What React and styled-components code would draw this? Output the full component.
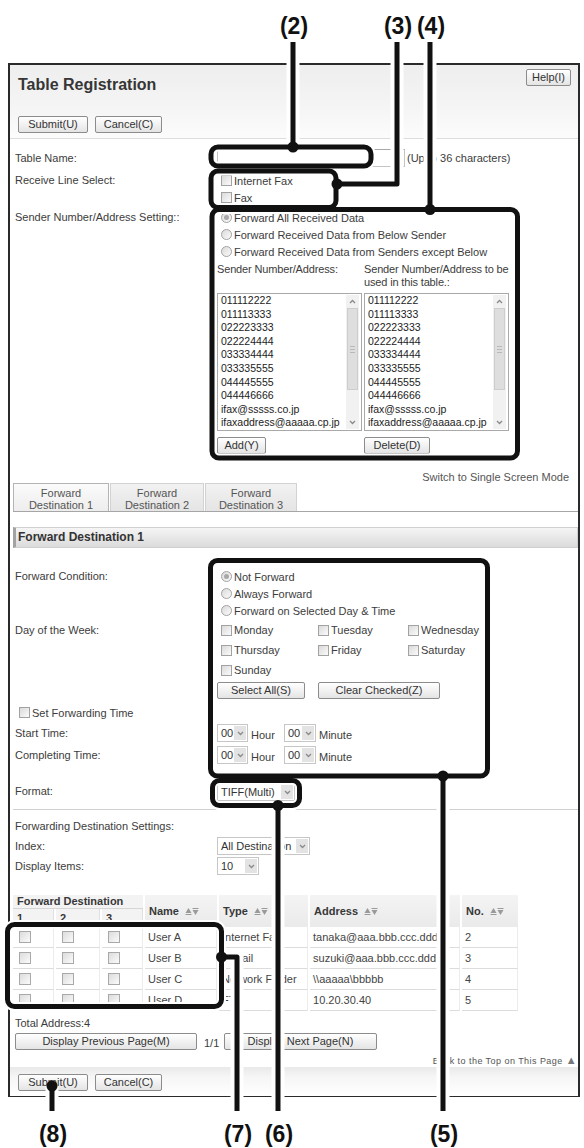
import React from "react";
import styled, { createGlobalStyle } from "styled-components";

const GlobalStyle = createGlobalStyle`
  html, body {
    margin: 0;
    padding: 0;
    background: #fff;
  }
  body {
    font-family: "Liberation Sans", Arial, sans-serif;
    font-size: 11px;
    color: #3c3c3c;
  }
  * {
    box-sizing: border-box;
  }
`;

const SENDERS = [
  "011112222",
  "011113333",
  "022223333",
  "022224444",
  "033334444",
  "033335555",
  "044445555",
  "044446666",
  "ifax@sssss.co.jp",
  "ifaxaddress@aaaaa.cp.jp",
];

const DAYS = [
  "Monday",
  "Tuesday",
  "Wednesday",
  "Thursday",
  "Friday",
  "Saturday",
  "Sunday",
];

const DESTINATIONS = [
  { name: "User A", type: "Internet Fax", address: "tanaka@aaa.bbb.ccc.ddd", no: 2 },
  { name: "User B", type: "E-mail", address: "suzuki@aaa.bbb.ccc.ddd", no: 3 },
  { name: "User C", type: "Network Folder", address: "\\\\aaaaa\\bbbbb", no: 4 },
  { name: "User D", type: "FTP", address: "10.20.30.40", no: 5 },
];

const COLUMNS = [41, 44, 41, 72, 89, 128, 20, 56];

// callout boxes and leader lines drawn over the screenshot
const BOXES = [
  { x: 211, y: 147, w: 160, h: 19 },
  { x: 211, y: 171, w: 125, h: 36.5 },
  { x: 212, y: 209.5, w: 305.5, h: 248.5 },
  { x: 210.5, y: 560.5, w: 277, h: 215.5 },
  { x: 212.5, y: 780.5, w: 87, h: 25 },
  { x: 7.5, y: 924.5, w: 214, h: 82 },
];

const LEADERS = [
  "M293 42 V147",
  "M397 42 V184 H337",
  "M430 42 V209.5",
  "M443 776 V1111",
  "M278 805.5 V1111",
  "M221.5 957 H237 V1111",
  "M52 1086 V1111",
];

const DOTS = [
  [293, 147],
  [337, 184],
  [430, 209.5],
  [443, 776],
  [278, 805.5],
  [221.5, 957],
  [52, 1086],
];

const LABELS = [
  { t: "(2)", x: 294, y: 34 },
  { t: "(3)", x: 398, y: 34 },
  { t: "(4)", x: 431, y: 34 },
  { t: "(8)", x: 53, y: 1142 },
  { t: "(7)", x: 238, y: 1142 },
  { t: "(6)", x: 279, y: 1142 },
  { t: "(5)", x: 444, y: 1142 },
];

const Chevron = ({ up }) => (
  <svg width="7" height="5" viewBox="0 0 7 5">
    <polyline
      points={up ? "1,4 3.5,1.5 6,4" : "1,1 3.5,3.5 6,1"}
      fill="none"
      stroke="#8a8a8a"
      strokeWidth="1.3"
    />
  </svg>
);

const SortIcon = () => (
  <SortSvg width="14" height="9" viewBox="0 0 14 9">
    <path d="M0.5 6 L3.5 1 L6.5 6 Z" fill="#9a9a9a" />
    <rect x="0.5" y="7" width="6" height="1" fill="#9a9a9a" />
    <rect x="7.5" y="1" width="6" height="1" fill="#9a9a9a" />
    <path d="M7.5 3 L13.5 3 L10.5 8 Z" fill="#9a9a9a" />
  </SortSvg>
);

const Dropdown = ({ w, children }) => (
  <Select $w={w}>
    <span>{children}</span>
    <SelectArrow>
      <Chevron />
    </SelectArrow>
  </Select>
);

const SenderList = () => (
  <ListBox>
    <ListItems>
      {SENDERS.map((s) => (
        <div key={s}>{s}</div>
      ))}
    </ListItems>
    <ScrollBar>
      <ScrollArrow>
        <Chevron up />
      </ScrollArrow>
      <ScrollThumb>
        <Grip />
        <Grip />
        <Grip />
      </ScrollThumb>
      <ScrollTrack />
      <ScrollArrow>
        <Chevron />
      </ScrollArrow>
    </ScrollBar>
  </ListBox>
);

const TimeSelects = () => (
  <TimeLine>
    <Line $h={18}>
      <Dropdown w={31}>00</Dropdown>
      <Unit>Hour</Unit>
    </Line>
    <Line $h={18}>
      <Dropdown w={32}>00</Dropdown>
      <Unit>Minute</Unit>
    </Line>
  </TimeLine>
);

const App = () => {
  return (
    <Page>
      <GlobalStyle />
      <Frame>
        <Header>
          <TitleLine>
            <Title>Table Registration</Title>
            <Button $w={45} $top={4}>
              Help(I)
            </Button>
          </TitleLine>
          <ButtonBar>
            <Button $w={70}>Submit(U)</Button>
            <Button $w={67}>Cancel(C)</Button>
          </ButtonBar>
        </Header>

        <Form>
          <Row $mt={10}>
            <Label $lh={18}>Table Name:</Label>
            <Line $h={18}>
              <TextInput />
              <Hint>(Up to 36 characters)</Hint>
            </Line>
          </Row>

          <Row $mt={5}>
            <Label>Receive Line Select:</Label>
            <div>
              <Line>
                <Check />
                Internet Fax
              </Line>
              <Line>
                <Check />
                Fax
              </Line>
            </div>
          </Row>

          <Row $mt={3}>
            <Label>Sender Number/Address Setting::</Label>
            <div>
              <Line>
                <Radio $on />
                Forward All Received Data
              </Line>
              <Line>
                <Radio />
                Forward Received Data from Below Sender
              </Line>
              <Line>
                <Radio />
                Forward Received Data from Senders except Below
              </Line>
              <Pair $mt={3}>
                <ColHead>Sender Number/Address:</ColHead>
                <ColHead>
                  Sender Number/Address to be
                  <br />
                  used in this table.:
                </ColHead>
              </Pair>
              <Pair $mt={4}>
                <SenderList />
                <SenderList />
              </Pair>
              <Pair $mt={6}>
                <div>
                  <Button $w={49}>Add(Y)</Button>
                </div>
                <div>
                  <Button $w={66}>Delete(D)</Button>
                </div>
              </Pair>
            </div>
          </Row>

          <SwitchMode>Switch to Single Screen Mode</SwitchMode>

          <Tabs>
            <Tab $w={96} $active>
              Forward
              <br />
              Destination 1
            </Tab>
            <Tab $w={94}>
              Forward
              <br />
              Destination 2
            </Tab>
            <Tab $w={92}>
              Forward
              <br />
              Destination 3
            </Tab>
          </Tabs>

          <SectionBar>Forward Destination 1</SectionBar>

          <Row $mt={20}>
            <Label>Forward Condition:</Label>
            <div>
              <Line>
                <Radio $on />
                Not Forward
              </Line>
              <Line>
                <Radio />
                Always Forward
              </Line>
              <Line>
                <Radio />
                Forward on Selected Day &amp; Time
              </Line>
            </div>
          </Row>

          <Row $mt={1}>
            <Label $lh={20}>Day of the Week:</Label>
            <div>
              <DayGrid>
                {DAYS.map((d) => (
                  <Line key={d} $h={20}>
                    <Check />
                    {d}
                  </Line>
                ))}
              </DayGrid>
              <ButtonBar $gap={13} $mt={2}>
                <Button $w={88}>Select All(S)</Button>
                <Button $w={122}>Clear Checked(Z)</Button>
              </ButtonBar>
            </div>
          </Row>

          <Row $mt={5}>
            <Line>
              <Check />
              Set Forwarding Time
            </Line>
          </Row>

          <Row $mt={3}>
            <Label $lh={18}>Start Time:</Label>
            <TimeSelects />
          </Row>

          <Row $mt={4}>
            <Label $lh={18}>Completing Time:</Label>
            <TimeSelects />
          </Row>

          <Row $mt={19}>
            <Label $lh={16}>Format:</Label>
            <Dropdown w={78}>TIFF(Multi)</Dropdown>
          </Row>

          <Separator />

          <WideLabel>Forwarding Destination Settings:</WideLabel>

          <Row $mt={2}>
            <Label $lh={18}>Index:</Label>
            <Dropdown w={93}>All Destination</Dropdown>
          </Row>

          <Row $mt={2}>
            <Label $lh={18}>Display Items:</Label>
            <Dropdown w={42}>10</Dropdown>
          </Row>

          <DestTable>
            <colgroup>
              {COLUMNS.map((w, i) => (
                <Col key={i} $w={w} />
              ))}
            </colgroup>
            <thead>
              <tr>
                <GroupHead colSpan={3}>Forward Destination</GroupHead>
                <Th rowSpan={2}>
                  Name
                  <SortIcon />
                </Th>
                <Th rowSpan={2}>
                  Type
                  <SortIcon />
                </Th>
                <Th rowSpan={2}>
                  Address
                  <SortIcon />
                </Th>
                <Th rowSpan={2} />
                <Th rowSpan={2}>
                  No.
                  <SortIcon />
                </Th>
              </tr>
              <tr>
                <SubHead>1</SubHead>
                <SubHead>2</SubHead>
                <SubHead>3</SubHead>
              </tr>
            </thead>
            <tbody>
              {DESTINATIONS.map((d) => (
                <tr key={d.name}>
                  <Td>
                    <CellCheck />
                  </Td>
                  <Td>
                    <CellCheck />
                  </Td>
                  <Td>
                    <CellCheck />
                  </Td>
                  <Td>{d.name}</Td>
                  <Td>{d.type}</Td>
                  <Td>{d.address}</Td>
                  <Td />
                  <Td>{d.no}</Td>
                </tr>
              ))}
            </tbody>
          </DestTable>

          <Total>Total Address:4</Total>

          <Pager>
            <Button $w={182}>Display Previous Page(M)</Button>
            <PageCount>1/1</PageCount>
            <Button $w={153}>Display Next Page(N)</Button>
          </Pager>

          <BackTop>
            Back to the Top on This Page <span>▲</span>
          </BackTop>
        </Form>

        <Footer>
          <Button $w={70}>Submit(U)</Button>
          <Button $w={67}>Cancel(C)</Button>
        </Footer>
      </Frame>

      <Overlay width="584" height="1148" viewBox="0 0 584 1148">
        <g fill="none" stroke="#fff" strokeLinejoin="round">
          {BOXES.map((b, i) => (
            <rect key={i} x={b.x} y={b.y} width={b.w} height={b.h} rx="7" strokeWidth="9" />
          ))}
          {LEADERS.map((d) => (
            <path key={d} d={d} strokeWidth="13" />
          ))}
        </g>
        <g fill="none" stroke="#111" strokeWidth="5" strokeLinejoin="round">
          {BOXES.map((b, i) => (
            <rect key={i} x={b.x} y={b.y} width={b.w} height={b.h} rx="7" />
          ))}
          {LEADERS.map((d) => (
            <path key={d} d={d} />
          ))}
        </g>
        {DOTS.map(([cx, cy]) => (
          <circle key={`${cx}-${cy}`} cx={cx} cy={cy} r="5.5" fill="#111" />
        ))}
        {LABELS.map((l) => (
          <CalloutText key={l.t} x={l.x} y={l.y} textAnchor="middle">
            {l.t}
          </CalloutText>
        ))}
      </Overlay>
    </Page>
  );
};

export default App;

const Page = styled.div`
  position: relative;
  width: 584px;
  height: 1148px;
  padding-top: 63px;
  overflow: hidden;
`;

const Frame = styled.div`
  margin-left: 8px;
  width: 572px;
  height: 1034px;
  border: 2px solid #2a2a2a;
  display: flex;
  flex-direction: column;
  > * {
    flex-shrink: 0;
  }
`;

const Header = styled.div`
  height: 74px;
  padding: 0 7px 5px 8px;
  display: flex;
  flex-direction: column;
  justify-content: space-between;
  background: linear-gradient(#eeeeee, #f5f5f5 60%, #fcfcfc);
  border-bottom: 1px solid #dddddd;
`;

const TitleLine = styled.div`
  display: flex;
  justify-content: space-between;
  align-items: flex-start;
`;

const Title = styled.h1`
  margin: 10px 0 0;
  font-size: 16px;
  line-height: 20px;
  font-weight: bold;
  color: #363636;
`;

const ButtonBar = styled.div`
  display: flex;
  gap: ${(p) => p.$gap || 7}px;
  margin-top: ${(p) => p.$mt || 0}px;
`;

const Button = styled.button`
  flex: none;
  width: ${(p) => p.$w}px;
  height: 17px;
  margin-top: ${(p) => p.$top || 0}px;
  padding: 0;
  font-family: "Liberation Sans", Arial, sans-serif;
  font-size: 11px;
  line-height: 15px;
  white-space: nowrap;
  color: #333;
  background: linear-gradient(#ffffff, #e4e4e4);
  border: 1px solid #8c8c8c;
  border-radius: 2px;
`;

const Form = styled.div`
  padding-left: 5px;
`;

const Row = styled.div`
  display: grid;
  grid-template-columns: 202px 1fr;
  margin-top: ${(p) => p.$mt || 0}px;
`;

const Label = styled.div`
  line-height: ${(p) => p.$lh || 17}px;
  white-space: nowrap;
`;

const WideLabel = styled.div`
  margin-top: 8px;
  line-height: 17px;
`;

const Line = styled.div`
  display: flex;
  align-items: center;
  height: ${(p) => p.$h || 17}px;
  white-space: nowrap;
`;

const Check = styled.span`
  flex: none;
  width: 11px;
  height: 11px;
  margin: 0 2px 0 4px;
  border: 1px solid #a2a2a2;
  background: linear-gradient(135deg, #dadada, #fbfbfb);
`;

const Radio = styled.span`
  flex: none;
  position: relative;
  width: 11px;
  height: 11px;
  margin: 0 2px 0 4px;
  border: 1px solid #a2a2a2;
  border-radius: 50%;
  background: linear-gradient(135deg, #dadada, #fbfbfb);
  &::after {
    content: "";
    display: ${(p) => (p.$on ? "block" : "none")};
    position: absolute;
    left: 2px;
    top: 2px;
    width: 5px;
    height: 5px;
    border-radius: 50%;
    background: #a8a8a8;
  }
`;

const TextInput = styled.div`
  width: 188px;
  height: 18px;
  border: 1px solid #c4c4c4;
  border-top-color: #a8a8a8;
  background: #fff;
`;

const Hint = styled.span`
  margin-left: 2px;
`;

const Pair = styled.div`
  display: grid;
  grid-template-columns: 145px 145px;
  column-gap: 2px;
  margin-top: ${(p) => p.$mt || 0}px;
`;

const ColHead = styled.div`
  line-height: 13px;
  min-height: 26px;
  white-space: nowrap;
  letter-spacing: -0.15px;
`;

const ListBox = styled.div`
  display: flex;
  height: 138px;
  border: 1px solid #a9a9a9;
  background: #fff;
`;

const ListItems = styled.div`
  flex: 1;
  min-width: 0;
  padding-left: 3px;
  font-size: 10.5px;
  line-height: 13.6px;
  color: #222;
  white-space: nowrap;
  overflow: hidden;
`;

const ScrollBar = styled.div`
  flex: none;
  width: 13px;
  margin: 1px 2px 1px 0;
  display: flex;
  flex-direction: column;
  background: #f1f1f1;
`;

const ScrollArrow = styled.div`
  height: 13px;
  display: flex;
  align-items: center;
  justify-content: center;
`;

const ScrollThumb = styled.div`
  height: 82px;
  margin: 0 1px;
  display: flex;
  flex-direction: column;
  justify-content: center;
  align-items: center;
  gap: 2px;
  background: #dedede;
  border: 1px solid #cdcdcd;
`;

const Grip = styled.span`
  width: 5px;
  height: 1px;
  background: #b8b8b8;
`;

const ScrollTrack = styled.div`
  flex: 1;
`;

const SwitchMode = styled.div`
  margin-top: 17px;
  padding-right: 9px;
  line-height: 12px;
  text-align: right;
  color: #555;
`;

const Tabs = styled.div`
  display: flex;
  gap: 1px;
  height: 29px;
  margin-left: -2px;
  border-bottom: 1px solid #a6a6a6;
`;

const Tab = styled.div`
  width: ${(p) => p.$w}px;
  height: 28px;
  padding-top: 3px;
  line-height: 12px;
  text-align: center;
  color: #555;
  border: 1px solid ${(p) => (p.$active ? "#b4b4b4" : "#d2d2d2")};
  border-bottom: none;
  background: ${(p) =>
    p.$active
      ? "linear-gradient(#fbfbfb, #ededed)"
      : "linear-gradient(#f2f2f2, #e4e4e4)"};
`;

const SectionBar = styled.div`
  margin: 15px 0 0 -2px;
  height: 21px;
  padding-left: 2px;
  line-height: 19px;
  font-size: 12px;
  font-weight: bold;
  color: #333;
  background: linear-gradient(#f5f5f5, #dbdbdb);
  border: 1px solid #d0d0d0;
  border-left: 3px solid #a3a3a3;
`;

const DayGrid = styled.div`
  display: grid;
  grid-template-columns: 97px 90px auto;
`;

const TimeLine = styled.div`
  display: grid;
  grid-template-columns: 67px auto;
`;

const Unit = styled.span`
  margin-left: 3px;
  padding-top: 3px;
`;

const Select = styled.div`
  flex: none;
  width: ${(p) => p.$w}px;
  height: 18px;
  padding-left: 3px;
  display: flex;
  align-items: center;
  justify-content: space-between;
  white-space: nowrap;
  overflow: hidden;
  color: #333;
  background: #fff;
  border: 1px solid #c6c6c6;
`;

const SelectArrow = styled.span`
  flex: none;
  width: 12px;
  height: 14px;
  margin-right: 1px;
  display: flex;
  align-items: center;
  justify-content: center;
  background: #e3e3e3;
`;

const Separator = styled.div`
  margin: 8px 0 0 -2px;
  border-top: 1px solid #d0d0d0;
`;

const DestTable = styled.table`
  margin: 20px 0 0 -4px;
  width: 509px;
  table-layout: fixed;
  border-collapse: separate;
  border-spacing: 2px 0;
  font-size: 11px;
`;

const Col = styled.col`
  width: ${(p) => p.$w}px;
`;

const Th = styled.th`
  height: 32px;
  padding: 0 0 0 4px;
  text-align: left;
  white-space: nowrap;
  font-weight: bold;
  color: #383838;
  background: linear-gradient(#f4f4f4, #eaeaea);
`;

const GroupHead = styled(Th)`
  height: 14px;
  line-height: 13px;
  vertical-align: top;
  background: #f3f3f3;
  border-bottom: 1px solid #d6d6d6;
`;

const SubHead = styled(Th)`
  height: 18px;
  background: #f3f3f3;
  border-right: 1px solid #e0e0e0;
`;

const SortSvg = styled.svg`
  margin-left: 6px;
  vertical-align: -1px;
`;

const Td = styled.td`
  height: 21px;
  padding: 0 0 0 3px;
  white-space: nowrap;
  overflow: hidden;
  color: #444;
  border-bottom: 1px solid #dcdcdc;
  border-right: 1px solid #ececec;
`;

const CellCheck = styled.span`
  display: block;
  width: 12px;
  height: 12px;
  margin-left: 3px;
  border: 1px solid #a9a9a9;
  background: linear-gradient(135deg, #dcdcdc, #fbfbfb);
`;

const Total = styled.div`
  margin-top: 4px;
  line-height: 16px;
`;

const Pager = styled.div`
  display: flex;
  align-items: center;
  margin-top: 2px;
`;

const PageCount = styled.span`
  width: 27px;
  padding-left: 7px;
  padding-top: 3px;
`;

const BackTop = styled.div`
  margin-top: 4px;
  padding-right: 1px;
  line-height: 12px;
  text-align: right;
  font-size: 9px;
  letter-spacing: 0.45px;
  color: #555;
  span {
    font-size: 11px;
    color: #777;
  }
`;

const Footer = styled.div`
  margin-top: auto;
  height: 29px;
  padding: 7px 0 0 8px;
  display: flex;
  gap: 7px;
  background: linear-gradient(#e9e9e9, #f6f6f6 35%, #ffffff);
`;

const Overlay = styled.svg`
  position: absolute;
  left: 0;
  top: 0;
  pointer-events: none;
`;

const CalloutText = styled.text`
  font-family: "Liberation Sans", Arial, sans-serif;
  font-size: 23px;
  font-weight: bold;
  fill: #111;
`;
